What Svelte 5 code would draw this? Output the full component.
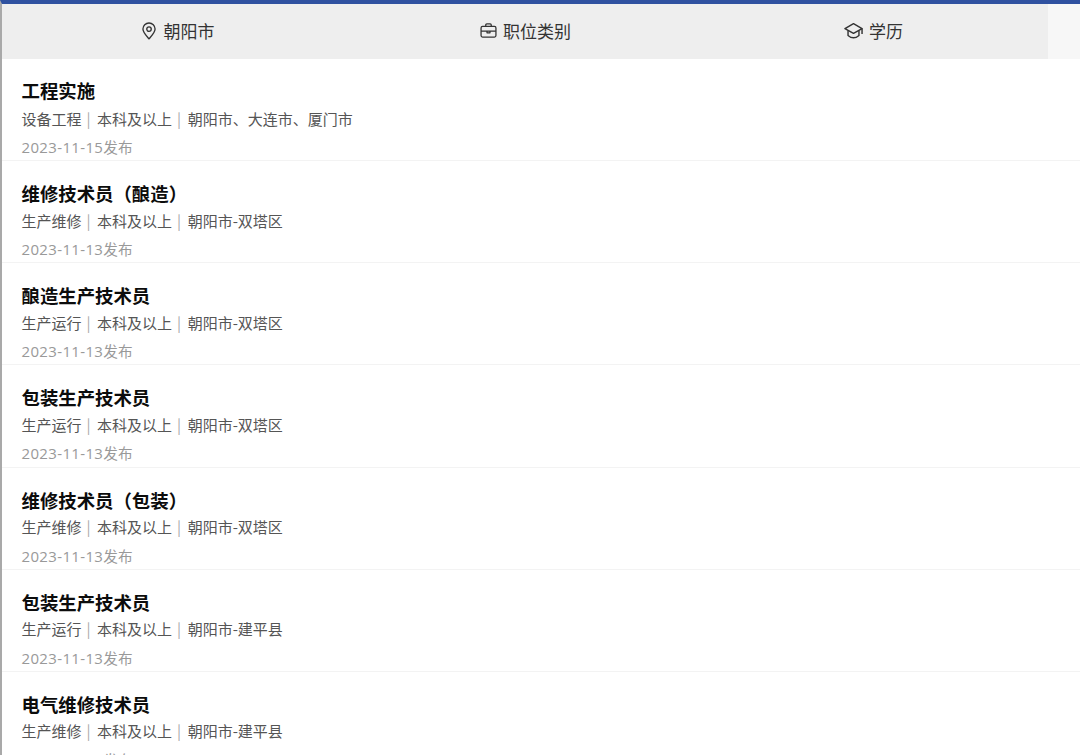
<script>
  const tabs = [
    { icon: "pin", label: "朝阳市", size: 18 },
    { icon: "case", label: "职位类别", size: 17 },
    { icon: "cap", label: "学历", size: 19 }
  ];

  const jobs = [
    { title: "工程实施", type: "设备工程", place: "朝阳市、大连市、厦门市", date: "2023-11-15" },
    { title: "维修技术员（酿造）", type: "生产维修", place: "朝阳市-双塔区", date: "2023-11-13" },
    { title: "酿造生产技术员", type: "生产运行", place: "朝阳市-双塔区", date: "2023-11-13" },
    { title: "包装生产技术员", type: "生产运行", place: "朝阳市-双塔区", date: "2023-11-13" },
    { title: "维修技术员（包装）", type: "生产维修", place: "朝阳市-双塔区", date: "2023-11-13" },
    { title: "包装生产技术员", type: "生产运行", place: "朝阳市-建平县", date: "2023-11-13" },
    { title: "电气维修技术员", type: "生产维修", place: "朝阳市-建平县", date: "2023-11-13" }
  ];
</script>

<div class="page">
  <div class="tabs">
    {#each tabs as tab}
      <div class="tab {tab.icon}">
        <svg class="icon" viewBox="0 0 16 16" width={tab.size} height={tab.size} fill="none" stroke="#333" stroke-width="1.2" stroke-linejoin="round">
          {#if tab.icon === "pin"}
            <path d="M8 15 C5.2 11.8 2.6 9.2 2.6 6.3 A5.4 5.4 0 0 1 13.4 6.3 C13.4 9.2 10.8 11.8 8 15 Z" />
            <circle cx="8" cy="6.3" r="2" />
          {:else if tab.icon === "case"}
            <rect x="1" y="4.2" width="14" height="10" rx="1.4" />
            <path d="M5.4 4.2 V2.8 Q5.4 1.8 6.4 1.8 H9.6 Q10.6 1.8 10.6 2.8 V4.2" />
            <path d="M1 8.6 H15 M6.6 8.6 V10.2 H9.4 V8.6" />
          {:else}
            <path d="M8 2.2 L15.2 6.4 L8 10.4 L0.8 6.4 Z" />
            <path d="M3.4 8 V12.2 Q8 16.2 12.6 12.2 V8" />
            <path d="M15.2 6.4 V11" />
          {/if}
        </svg>
        <span>{tab.label}</span>
      </div>
    {/each}
    <div class="tab-end"></div>
  </div>

  <ul class="jobs">
    {#each jobs as job}
      <li class="job">
        <h3>{job.title}</h3>
        <p class="meta">{job.type}<i>|</i>本科及以上<i>|</i>{job.place}</p>
        <p class="date"><span>{job.date}</span>发布</p>
      </li>
    {/each}
  </ul>
  <div class="edge-tint"></div>
</div>

<style>
  :global(body) {
    margin: 0;
    background: #fff;
    overflow: hidden;
  }

  .page {
    position: relative;
    height: 755px;
    overflow: hidden;
    border-left: 2px solid #a9a9a9;
    border-top: 4px solid #2f51a0;
    box-sizing: border-box;
    font-family: "Noto Sans CJK SC", "Noto Sans", sans-serif;
  }

  .tabs {
    display: flex;
    height: 55px;
    background: #f7f7f7;
  }

  .tab {
    display: flex;
    align-items: center;
    justify-content: center;
    gap: 6px;
    box-sizing: border-box;
    height: 100%;
    padding-bottom: 2px;
    background: #eeeeee;
    font-size: 17px;
    color: #333;
  }

  .tab.pin { width: 350px; }
  .tab.case { width: 347px; }
  .tab.cap { width: 349px; }
  .tab-end { flex: 1; }

  .jobs {
    list-style: none;
    margin: 0;
    padding: 0;
  }

  .job {
    box-sizing: border-box;
    height: 102.2px;
    padding: 18px 0 0 19.5px;
    border-bottom: 1px solid #f3f3f3;
  }

  .job:first-child {
    height: 102px;
    padding-top: 17px;
  }

  h3 {
    margin: 0;
    height: 27.5px;
    line-height: 28px;
    font-size: 18.4px;
    font-weight: 700;
    color: #0c0c0c;
  }

  .job:first-child h3 {
    height: 29px;
  }

  .meta {
    margin: 0;
    height: 28.5px;
    line-height: 28px;
    font-size: 15px;
    color: #555;
    white-space: nowrap;
  }

  .job:first-child .meta {
    height: 27.5px;
  }

  .meta i {
    font-style: normal;
    color: #aaa;
    padding: 0 6.5px 0 5px;
  }

  .date {
    margin: 0;
    height: 28px;
    line-height: 28px;
    font-size: 14.6px;
    color: #999;
  }

  .date span {
    font-family: "Open Sans", "Noto Sans CJK SC", sans-serif;
    font-size: 15px;
    letter-spacing: 0.35px;
  }

  .edge-tint {
    position: absolute;
    left: -2px;
    top: 158px;
    width: 2px;
    height: 150px;
    background: #7fa493;
  }
</style>
